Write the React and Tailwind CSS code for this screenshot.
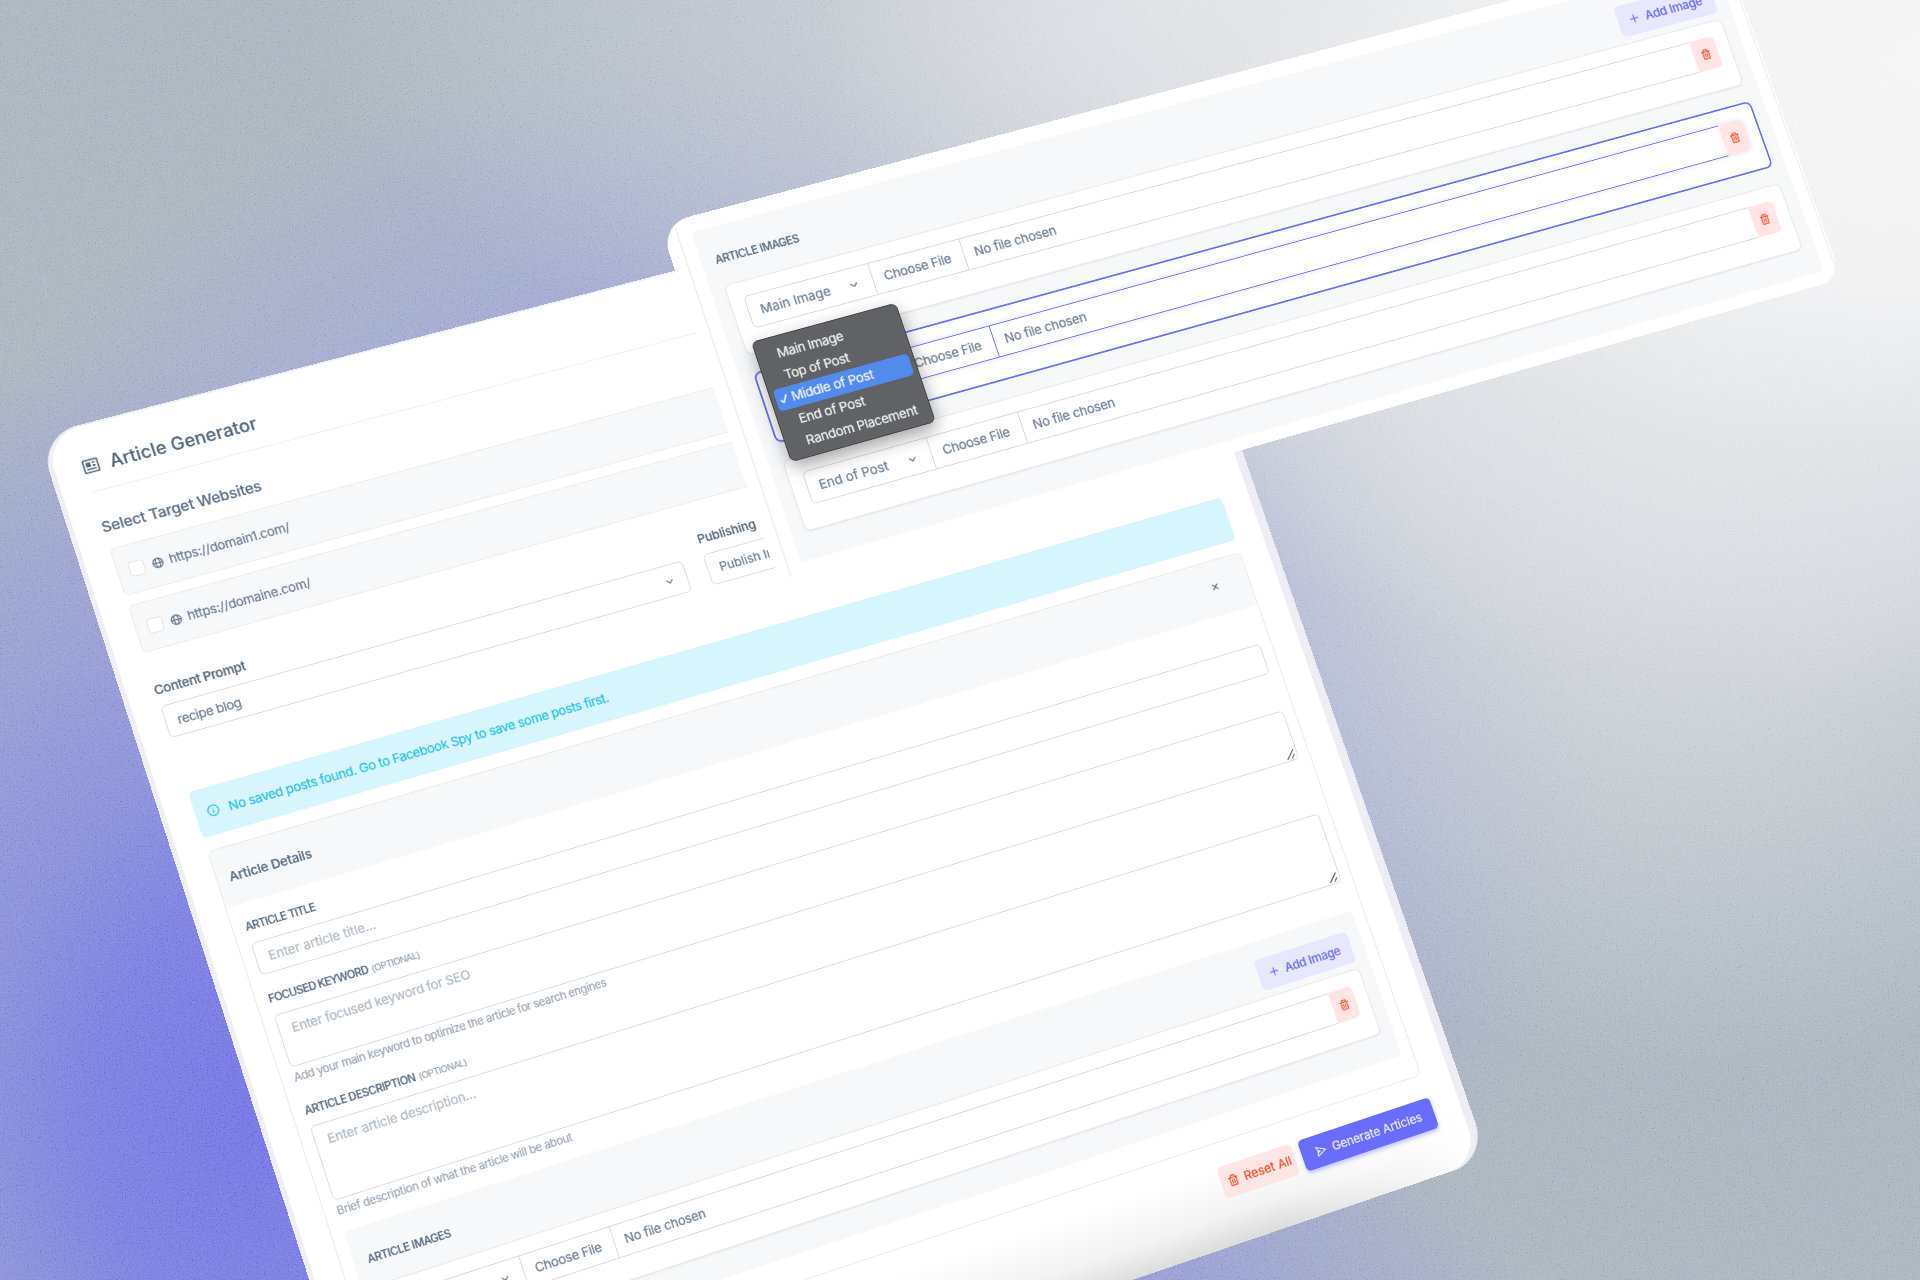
import React, { useLayoutEffect, useRef, useState } from "react";
import { BiNews, BiGlobe, BiTrash, BiSend, BiInfoCircle, BiPlus, BiX, BiChevronDown, BiCheck } from "react-icons/bi";

/* CSS matrix that projects a w×h rectangle onto the quad [tl, tr, br, bl]. */
function project(w, h, [p0, p1, p2, p3]) {
  const dx1 = p1[0] - p2[0], dx2 = p3[0] - p2[0], dx3 = p0[0] - p1[0] + p2[0] - p3[0];
  const dy1 = p1[1] - p2[1], dy2 = p3[1] - p2[1], dy3 = p0[1] - p1[1] + p2[1] - p3[1];
  const det = dx1 * dy2 - dx2 * dy1;
  const g = (dx3 * dy2 - dx2 * dy3) / det;
  const k = (dx1 * dy3 - dx3 * dy1) / det;
  const a = p1[0] - p0[0] + g * p1[0], b = p3[0] - p0[0] + k * p3[0];
  const d = p1[1] - p0[1] + g * p1[1], e = p3[1] - p0[1] + k * p3[1];
  const m = [a / w, d / w, 0, g / w, b / h, e / h, 0, k / h, 0, 0, 1, 0, p0[0], p0[1], 0, 1];
  return `matrix3d(${m.join(",")})`;
}

const MAIN = project(1300, 680, [[207.3, 852.4], [1240.2, 552.7], [1421.4, 1076], [389.9, 1419]]);
const PANEL = project(1270, 400, [[691.2, 232.2], [1713.6, -37.8], [1824.4, 272.4], [801.6, 564.1]]);

/* A line of text tracked to a given width. */
function Line({ w, className = "", children }) {
  const ref = useRef(null);
  const [space, setSpace] = useState(0);
  useLayoutEffect(() => {
    const el = ref.current;
    setSpace((w - el.offsetWidth) / el.textContent.length);
  }, [w]);
  return (
    <span ref={ref} className={`inline-block whitespace-pre ${className}`} style={{ letterSpacing: `${space}px` }}>
      {children}
    </span>
  );
}

function Site({ url, w }) {
  return (
    <div className="flex h-[58px] items-center rounded-md border border-[#e9ebee] bg-[#f7f8fa] pl-[13px]">
      <span className="mt-[2px] size-[18px] rounded-[4px] border border-[#dfe2e7] bg-white" />
      <BiGlobe className="mt-[2px] ml-2 size-[15px] text-[#5f7186]" />
      <Line w={w} className="ml-[6px] text-[15px] text-[#6c7d92]">{url}</Line>
    </div>
  );
}

function Label({ children, w, optional, className = "" }) {
  return (
    <div className={`flex h-5 items-center text-[12.5px] font-medium text-[#566a7f] ${className}`}>
      <Line w={w}>{children}</Line>
      {optional && <Line w={57} className="ml-1 text-[11px] font-normal text-[#9aa6b4]">(OPTIONAL)</Line>}
    </div>
  );
}

function Area({ text, w, className }) {
  return (
    <div className={`relative rounded-md border border-[#d6dade] px-[14px] pt-[8px] text-[15px] leading-[22px] text-[#b0bac5] ${className}`}>
      <Line w={w}>{text}</Line>
      <svg className="absolute right-[2px] bottom-[1px] size-[13px]" viewBox="0 0 13 13" fill="none" stroke="#5c5c5c" strokeWidth="1.3">
        <path d="M1.5 12 12 1.5M7.5 12 12 7.5" />
      </svg>
    </div>
  );
}

function AddImage() {
  return (
    <div className="flex h-[39px] w-[124px] items-center rounded-md bg-[#e7e7ff] pl-[12px] text-[#7072ff]">
      <BiPlus className="size-[17px]" />
      <Line w={74} className="ml-[6px] text-[15px] font-medium">Add Image</Line>
    </div>
  );
}

function ImageItem({ place, w, active, className = "" }) {
  const edge = active ? "border-[#696cff]" : "border-[#d3d7dc]";
  return (
    <div className={`h-[85px] rounded-lg bg-white px-[16px] pt-[17px] ${active ? "border-2 border-[#6c6fff] px-[15px] pt-[16px]" : "border border-[#e6e7ec] shadow-[0_1px_2px_rgba(67,89,113,0.10)]"} ${className}`}>
      <div className={`flex h-[39px] rounded-md text-[15px] text-[#6c7d92] ${active ? "shadow-[0_0_6px_rgba(105,108,255,0.22)]" : ""}`}>
        <div className={`flex w-[147px] items-center justify-between rounded-l-md border pr-[13px] pl-[13px] ${edge}`}>
          <Line w={w}>{place}</Line>
          <BiChevronDown className="size-[18px]" />
        </div>
        <div className={`flex w-[109px] items-center border-y border-r pl-[13px] ${edge}`}>
          <Line w={80}>Choose File</Line>
        </div>
        <div className={`flex flex-1 items-center border-y pl-[12px] ${edge}`}>
          <Line w={98}>No file chosen</Line>
        </div>
        <div className="flex w-[31px] items-center justify-center rounded-r-md bg-[#ffe5e3]">
          <BiTrash className="size-[15px] text-[#ff4a2c]" />
        </div>
      </div>
    </div>
  );
}

function ImagesPanel({ children }) {
  return (
    <section className="rounded-md bg-[#f7f8fa] px-4 pt-[22px] pb-8">
      <div className="mb-[8px] flex items-center justify-between">
        <Line w={98} className="mb-[4px] text-[12.5px] font-medium text-[#566a7f]">ARTICLE IMAGES</Line>
        <AddImage />
      </div>
      <div className="flex flex-col gap-[21px]">{children}</div>
    </section>
  );
}

function MainCard() {
  return (
    <div
      className="absolute top-0 left-0 h-[1322px] w-[1384px] origin-top-left rounded-[46px] bg-[linear-gradient(90deg,#efeef5,#f3f2f8_50%,#eeedf3)] pt-[2px] pr-[11px] pl-[6px]"
      style={{ transform: `${MAIN} translate(-38px,-521px)` }}
    >
      <div className="relative h-[1320px] overflow-hidden rounded-[42px] bg-white pr-[35px] pl-[32px]">
        <header className="flex h-[79px] items-start border-b border-[#eceef0] pt-[28px] text-[#566a7f]">
          <div className="-ml-[2px] flex h-10 items-center">
            <BiNews className="mb-px size-[22px]" />
            <Line w={174} className="ml-[11px] text-[21px] font-medium">Article Generator</Line>
          </div>
        </header>

        <h2 className="mt-[31px] -ml-px flex h-6 items-center text-[#5f7186]">
          <Line w={188} className="text-[17.5px] font-medium">Select Target Websites</Line>
        </h2>
        <div className="mt-[14px] flex flex-col gap-3">
          <Site url="https://domain1.com/" w={143} />
          <Site url="https://domaine.com/" w={146} />
        </div>

        <div className="mt-[34px] flex gap-[26px] text-[15px] text-[#6c7d92]">
          <div className="w-[633px]">
            <div className="-ml-px flex h-[22px] items-center">
              <Line w={107} className="font-medium text-[#566a7f]">Content Prompt</Line>
            </div>
            <div className="mt-[9px] flex h-[39px] items-center justify-between rounded-md border border-[#d6dade] pt-[2px] pr-[12px] pl-[13px]">
              <Line w={75}>recipe blog</Line>
              <BiChevronDown className="mb-[2px] size-[18px]" />
            </div>
          </div>
          <div className="flex-1">
            <div className="flex h-[22px] items-center">
              <Line w={125} className="font-medium text-[#566a7f]">Publishing  Status</Line>
            </div>
            <div className="mt-[9px] flex h-[39px] items-center rounded-md border border-[#d6dade] pl-[14px]">
              <Line w={141}>Publish Immediately</Line>
            </div>
          </div>
        </div>

        <div className="mt-[66px] flex h-[56px] items-center rounded-md bg-[#d7f5fc] pl-[13px] text-[#27c0e6]">
          <BiInfoCircle className="size-[16px]" />
          <Line w={458} className="ml-[10px] text-[15px]">No saved posts found. Go to Facebook Spy to save some posts first.</Line>
        </div>

        <main className="mt-4 h-[680px] rounded-lg border border-[#e6e8eb]">
          <div className="flex h-[68px] items-center justify-between rounded-t-lg bg-[#f7f8fa] pr-[36px] pl-[14px] text-[#566a7f]">
            <Line w={97} className="text-[15px] font-medium">Article Details</Line>
            <BiX className="mb-[4px] size-[16px]" />
          </div>
          <div className="px-[14px] pt-[18px]">
            <Label w={82}>ARTICLE TITLE</Label>
            <div className="mt-[9px] flex h-[39px] items-center rounded-md border border-[#d6dade] pl-[14px] text-[15px] text-[#b0bac5]">
              <Line w={126}>Enter article title...</Line>
            </div>
            <Label w={117} optional className="mt-[19px]">FOCUSED KEYWORD</Label>
            <Area text="Enter focused keyword for SEO" w={212} className="mt-[9px] h-[63px]" />
            <p className="mt-[3px] flex h-[18px] items-center text-[13px] text-[#9aa6b4]">
              <Line w={374}>Add your main keyword to optimize the article for search engines</Line>
            </p>
            <Label w={131} optional className="mt-[22px]">ARTICLE DESCRIPTION</Label>
            <Area text="Enter article description..." w={175} className="mt-[8px] h-[89px]" />
            <p className="mt-[3px] mb-[16px] flex h-[18px] items-center text-[13px] text-[#9aa6b4]">
              <Line w={280}>Brief description of what the article will be about</Line>
            </p>
            <ImagesPanel>
              <ImageItem place="Main Image" w={82} />
            </ImagesPanel>
          </div>
        </main>

        <div className="pointer-events-none absolute right-0 bottom-0 h-[95px] w-[900px] bg-[linear-gradient(to_top,#dcdcdc,#f3f3f3_38%,rgba(255,255,255,0))] [mask-image:linear-gradient(to_left,transparent,black_260px)]" />
        <footer className="relative mt-[28px] flex justify-end gap-[9px] text-[15px]">
          <div className="flex h-[39px] w-[98px] items-center rounded-md bg-[#ffe5e3] pl-[8px] text-[#ff4a2c]">
            <BiTrash className="size-[16px]" />
            <Line w={63} className="ml-[6px]">Reset All</Line>
          </div>
          <div className="flex h-[39px] w-[177px] items-center rounded-md bg-[#696cff] pl-[17px] text-[#ededff] shadow-[0_3px_5px_rgba(105,108,255,0.4)]">
            <BiSend className="size-[16px]" />
            <Line w={120} className="ml-[7px]">Generate Articles</Line>
          </div>
        </footer>
      </div>
    </div>
  );
}

const PLACES = [
  ["Main Image", 77],
  ["Top of Post", 76],
  ["Middle of Post", 96],
  ["End of Post", 77],
  ["Random Placement", 131],
];

function PlacementMenu() {
  return (
    <div className="absolute top-[158px] left-[56px] h-[145px] w-[171px] rounded-[7px] border border-[#3f4043] bg-[#606266] px-[5px] pt-[6px] shadow-[0_8px_20px_rgba(0,0,0,0.35)]">
      {PLACES.map(([name, w]) => (
        <div
          key={name}
          className={`flex h-[26.4px] items-center rounded-[5px] text-[15px] text-[#f5f5f6] ${name === "Middle of Post" ? "bg-[#528bee]" : ""}`}
        >
          <span className="flex w-[18px] justify-center">
            {name === "Middle of Post" && (
              <svg className="size-[12px]" viewBox="0 0 12 12" fill="none" stroke="currentColor" strokeWidth="1.7" strokeLinecap="round" strokeLinejoin="round">
                <path d="M2.5 7 5 10 9.5 2" />
              </svg>
            )}
          </span>
          <Line w={w}>{name}</Line>
        </div>
      ))}
    </div>
  );
}

function FloatingCard() {
  return (
    <div
      className="absolute top-0 left-0 h-[431px] w-[1319px] origin-top-left"
      style={{ transform: `${PANEL} translate(-31px,-18px)` }}
    >
      <div className="h-full overflow-hidden rounded-[26px] rounded-tl-[34px] bg-white pr-[2px] pl-[15px]">
        <div className="h-full border-x border-[#e6e8eb] px-[15px] pt-[18px]">
          <ImagesPanel>
            <ImageItem place="Main Image" w={82} />
            <ImageItem place="Middle of Post" w={98} active />
            <ImageItem place="End of Post" w={81} />
          </ImagesPanel>
        </div>
      </div>
      <PlacementMenu />
    </div>
  );
}

export default function App() {
  return (
    <div className="relative h-[1280px] w-[1920px] overflow-hidden bg-[#abb6c0] font-[Inter,'Liberation_Sans',sans-serif] leading-none [-webkit-text-stroke:0.2px]">
      <div className="absolute inset-0 bg-[radial-gradient(ellipse_400px_520px_at_260px_1110px,#7476e4_0%,rgba(122,125,226,0.9)_40%,rgba(133,138,220,0.5)_70%,rgba(160,168,205,0)_100%),radial-gradient(ellipse_640px_700px_at_80px_1060px,rgba(138,144,220,0.95)_0%,rgba(145,151,216,0.85)_45%,rgba(160,168,205,0)_100%),radial-gradient(ellipse_480px_260px_at_1060px_1340px,#8f93da_0%,rgba(150,155,215,0.6)_50%,rgba(160,168,205,0)_100%),radial-gradient(ellipse_1100px_640px_at_1920px_60px,#f5f5f6_0%,#f2f2f3_35%,rgba(228,230,233,0.75)_62%,rgba(205,210,216,0)_100%),radial-gradient(ellipse_900px_420px_at_1200px_0px,#dcdfe2_0%,rgba(210,214,220,0.6)_45%,rgba(190,197,205,0)_100%),radial-gradient(ellipse_640px_700px_at_1700px_380px,#dbdee1_0%,rgba(214,218,222,0.8)_45%,rgba(190,197,205,0)_100%),radial-gradient(ellipse_860px_720px_at_740px_760px,#989cdc_0%,#9a9fdb_45%,rgba(160,166,216,0.65)_70%,rgba(170,180,205,0)_100%)]" />
      <svg className="absolute inset-0 size-full opacity-25 mix-blend-soft-light">
        <filter id="grain" x="0" y="0" width="100%" height="100%">
          <feTurbulence type="fractalNoise" baseFrequency="0.67" numOctaves="3" seed="7" />
          <feColorMatrix type="saturate" values="0" />
          <feComponentTransfer>
            <feFuncR type="linear" slope="2.6" intercept="-0.8" />
            <feFuncG type="linear" slope="2.6" intercept="-0.8" />
            <feFuncB type="linear" slope="2.6" intercept="-0.8" />
            <feFuncA type="linear" slope="0" intercept="1" />
          </feComponentTransfer>
        </filter>
        <rect width="100%" height="100%" filter="url(#grain)" />
      </svg>
      <MainCard />
      <FloatingCard />
    </div>
  );
}
